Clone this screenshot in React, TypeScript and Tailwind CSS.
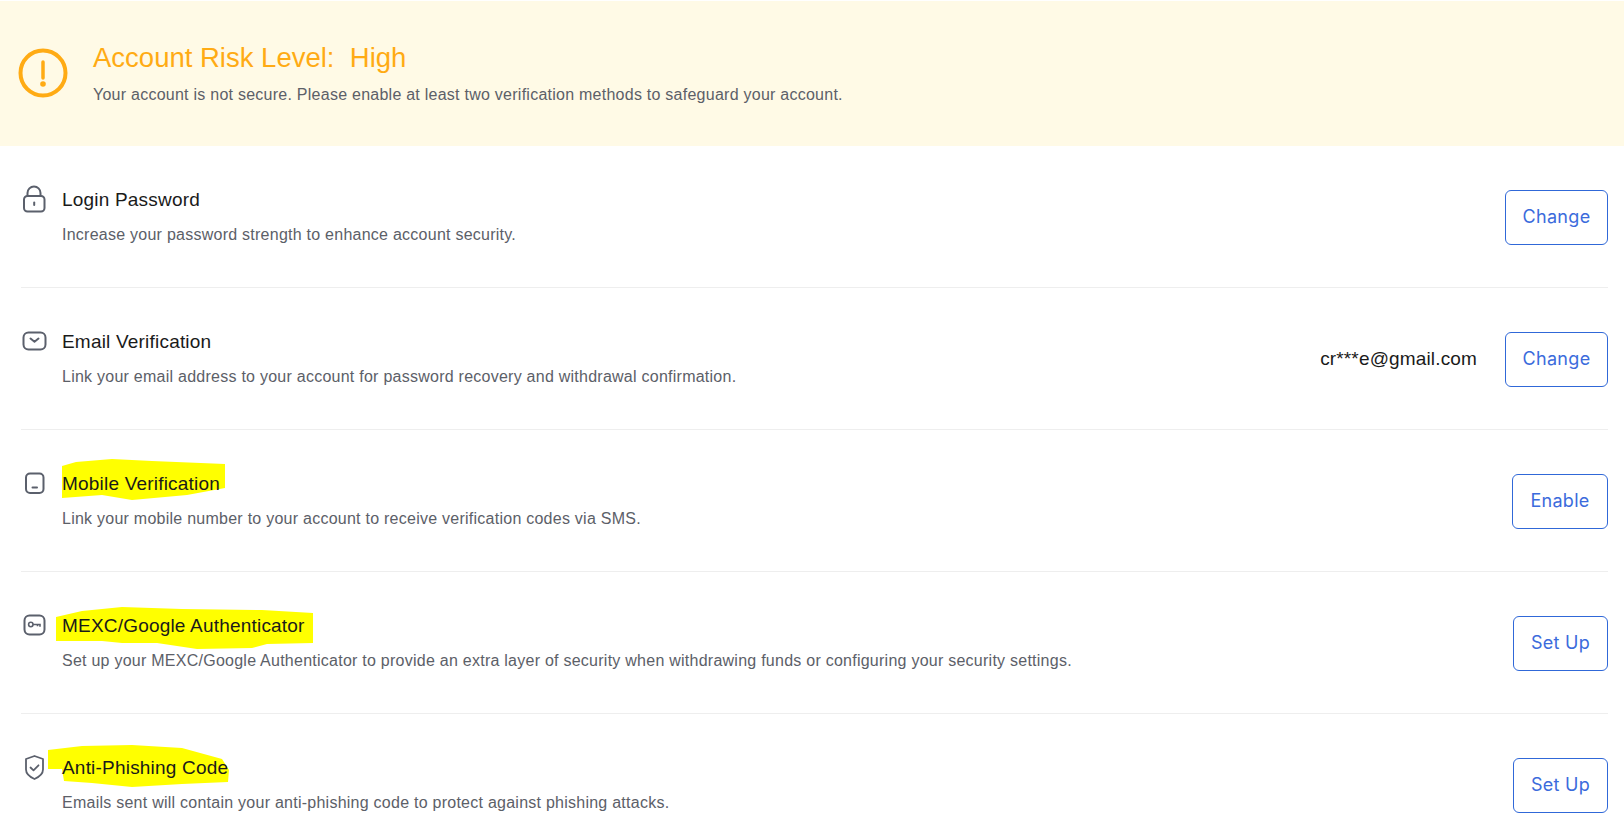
const LockIcon = () => (
  <svg width="28" height="28" viewBox="0 0 28 28" fill="none" stroke="#5b606c" strokeWidth="2">
    <path d="M7.5 11.5V8a6.5 6.5 0 0 1 13 0v3.5" />
    <rect x="4" y="11" width="20.5" height="15.5" rx="3.5" />
    <path d="M14.2 17.5v2.5" strokeLinecap="round" />
  </svg>
)

const MailIcon = () => (
  <svg width="28" height="28" viewBox="0 0 28 28" fill="none" stroke="#5b606c" strokeWidth="2">
    <rect x="3.5" y="5.5" width="22" height="17" rx="5" />
    <path d="M10.5 11.500l4 3.200 4-3.200" strokeLinecap="round" strokeLinejoin="round" />
  </svg>
)

const MobileIcon = () => (
  <svg width="28" height="28" viewBox="0 0 28 28" fill="none" stroke="#5b606c" strokeWidth="2">
    <rect x="6" y="4.500" width="17.500" height="19.500" rx="4" />
    <path d="M12.500 18.500h4.500" strokeLinecap="round" />
  </svg>
)

const KeyIcon = () => (
  <svg width="28" height="28" viewBox="0 0 28 28" fill="none" stroke="#5b606c" strokeWidth="2">
    <rect x="4.500" y="4.500" width="20" height="19" rx="5" />
    <circle cx="10.800" cy="13.500" r="2.200" strokeWidth="1.600" />
    <path d="M13 13.500h7v2.200M17.500 13.500v1.800" strokeWidth="1.600" />
  </svg>
)

const ShieldIcon = () => (
  <svg width="28" height="28" viewBox="0 0 28 28" fill="none" stroke="#5b606c" strokeWidth="1.800">
    <path d="M14.500 3l8.500 3v10.500c0 4-4 7.500-8.500 9.500C10 24 6 20.500 6 16.500V6z" strokeLinejoin="round" />
    <path d="M10.500 14.500l3 2.800 5-5" strokeLinecap="round" strokeLinejoin="round" />
  </svg>
)

const highlights = {
  mobile: "M0 -5 L14 -9 L50 -12 L90 -10 L163 -7 L163 17 L125 24 L70 29 L40 24 L0 27 Z",
  mexc: "M-6 4 L20 -2 L60 -6 L120 -4 L200 -3 L251 0 L251 30 L205 31 L190 35 L135 36 L95 30 L60 30 L40 28 L-6 28 Z",
  anti: "M-14 -5 L20 -9 L70 -10 L120 -7 L160 4 L167 15 L166 27 L120 29 L70 32 L30 28 L2 26 L0 14 L-14 14 Z",
}

const Row = ({
  icon,
  title,
  desc,
  action,
  width,
  value,
  highlight,
}: {
  icon: React.ReactNode
  title: string
  desc: string
  action: string
  width: string
  value?: string
  highlight?: string
}) => (
  <div className="flex h-[142px] items-center justify-between border-b border-[#eeeeee] last:border-transparent">
    <div className="pt-px">
      <div className="flex h-6 items-center">
        <div className="-ml-px -mt-[2px] w-[42px]">{icon}</div>
        <div className="relative text-[19px] leading-6 tracking-[0.2px] text-[#1a1a1a]">
          {highlight && (
            <svg className="absolute top-[-1px] left-0 overflow-visible" width="10" height="24">
              <path d={highlight} fill="#ffff00" />
            </svg>
          )}
          <span className="relative">{title}</span>
        </div>
      </div>
      <p className="mt-[11px] pl-[41px] text-[16px] leading-6 tracking-[0.25px] text-[#5c6068]">{desc}</p>
    </div>
    <div className="flex items-center pt-[2px]">
      {value && <span className="mr-[28px] text-[19px] tracking-[0.15px] text-[#1a1a1a]">{value}</span>}
      <button
        type="button"
        className={`h-[55px] rounded-[6px] border border-[#3068d8] bg-white pb-[3px] font-['Inter',sans-serif] text-[18px] tracking-[0.3px] text-[#3b6bdc] ${width}`}
      >
        {action}
      </button>
    </div>
  </div>
)

export default function App() {
  return (
    <div className="h-screen overflow-hidden bg-white font-['Liberation_Sans',Arial,sans-serif]">
      <div className="mt-px flex h-[145px] items-center bg-[#fffae6] pl-[18px]">
        <svg width="50" height="50" viewBox="0 0 50 50" fill="none" className="mt-[-2px]">
          <circle cx="25" cy="25" r="22.500" stroke="#ffab14" strokeWidth="4" />
          <path d="M25 14v16" stroke="#ffab14" strokeWidth="3.500" strokeLinecap="round" />
          <circle cx="25" cy="36" r="2.800" fill="#ffab14" />
        </svg>
        <div className="ml-[25px] pt-[2px]">
          <h1 className="mt-[-3px] text-[27.500px] leading-9 whitespace-pre text-[#ffab14]">Account Risk Level:  High</h1>
          <p className="mt-[7px] text-[16px] leading-6 tracking-[0.25px] text-[#5c6068]">
            Your account is not secure. Please enable at least two verification methods to safeguard your account.
          </p>
        </div>
      </div>
      <div className="mr-4 ml-[21px]">
        <Row
          icon={<LockIcon />}
          title="Login Password"
          desc="Increase your password strength to enhance account security."
          action="Change"
          width="w-[103px]"
        />
        <Row
          icon={<MailIcon />}
          title="Email Verification"
          desc="Link your email address to your account for password recovery and withdrawal confirmation."
          action="Change"
          width="w-[103px]"
          value="cr***e@gmail.com"
        />
        <Row
          icon={<MobileIcon />}
          title="Mobile Verification"
          desc="Link your mobile number to your account to receive verification codes via SMS."
          action="Enable"
          width="w-[96px]"
          highlight={highlights.mobile}
        />
        <Row
          icon={<KeyIcon />}
          title="MEXC/Google Authenticator"
          desc="Set up your MEXC/Google Authenticator to provide an extra layer of security when withdrawing funds or configuring your security settings."
          action="Set Up"
          width="w-[95px]"
          highlight={highlights.mexc}
        />
        <Row
          icon={<ShieldIcon />}
          title="Anti-Phishing Code"
          desc="Emails sent will contain your anti-phishing code to protect against phishing attacks."
          action="Set Up"
          width="w-[95px]"
          highlight={highlights.anti}
        />
      </div>
    </div>
  )
}
